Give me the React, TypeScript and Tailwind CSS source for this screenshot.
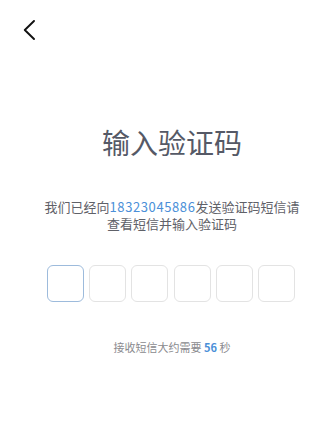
import React from "react";

export default function App() {
  const cells = [0, 1, 2, 3, 4, 5];
  return (
    <div
      className="w-[328px] h-[421px] bg-white relative overflow-hidden"
      style={{ fontFamily: '"Noto Sans CJK SC", "Noto Sans", sans-serif' }}
    >
      <div className="pt-[20px] pl-[23px] h-[128px]">
        <svg width="12" height="20" viewBox="0 0 12 20" fill="none">
          <path d="M11 1 L1.8 10 L11 19" stroke="#111" strokeWidth="1.9" strokeLinecap="round" strokeLinejoin="round" />
        </svg>
      </div>
      <div className="pl-[16px] text-center">
        <div className="text-[28px] leading-[28px] text-[#555966]">输入验证码</div>
        <div className="mt-[43px] flex flex-col items-center text-[13px] leading-[16px] text-[#5f6168]">
          <div className="flex items-baseline whitespace-nowrap">
            <span>我们已经向</span>
            <span className="text-[#4b8fd8] tracking-[0.6px]">18323045886</span>
            <span>发送验证码短信请</span>
          </div>
          <div className="mt-[1px] whitespace-nowrap">查看短信并输入验证码</div>
        </div>
      </div>
      <div className="mt-[33px] flex justify-center gap-[5.2px] pl-[14px]">
        {cells.map((i) => (
          <div
            key={i}
            className={
              i === 0
                ? "w-[37px] h-[37px] rounded-[6px] border-[1.5px] border-[#9dbbdc]"
                : "w-[37px] h-[37px] rounded-[6px] border-[1.5px] border-[#e3e3e3]"
            }
          />
        ))}
      </div>
      <div className="mt-[38px] pl-[16px] text-center text-[11px] leading-[14px] text-[#8a8a8e]">
        接收短信大约需要 <span className="text-[#4b8fd8] font-bold">56</span> 秒
      </div>
    </div>
  );
}
